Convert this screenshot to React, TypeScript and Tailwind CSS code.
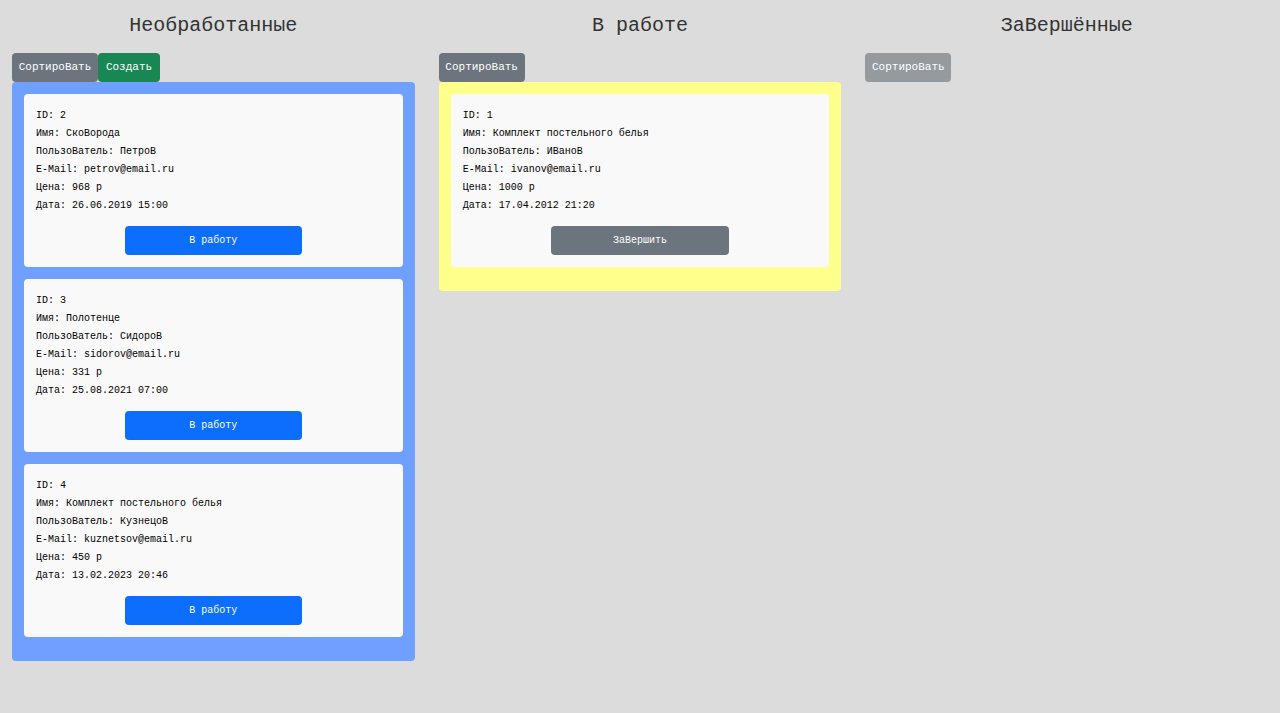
import React from 'react';

type Order = {
  id: number;
  name: string;
  user: string;
  email: string;
  price: number;
  date: string;
};

const fresh: Order[] = [
  { id: 2, name: 'СкоВорода', user: 'ПетроВ', email: 'petrov@email.ru', price: 968, date: '26.06.2019 15:00' },
  { id: 3, name: 'Полотенце', user: 'СидороВ', email: 'sidorov@email.ru', price: 331, date: '25.08.2021 07:00' },
  { id: 4, name: 'Комплект постельного белья', user: 'КузнецоВ', email: 'kuznetsov@email.ru', price: 450, date: '13.02.2023 20:46' },
];

const working: Order[] = [
  { id: 1, name: 'Комплект постельного белья', user: 'ИВаноВ', email: 'ivanov@email.ru', price: 1000, date: '17.04.2012 21:20' },
];

const OrderCard = ({ order, action, actionClass }: { order: Order; action: string; actionClass: string }) => (
  <div className="bg-[#f9f9f9] rounded-[4px] px-3 pt-[13px] pb-3 text-[10px] leading-[18px] text-black">
    <div>ID: {order.id}</div>
    <div>Имя: {order.name}</div>
    <div>ПользоВатель: {order.user}</div>
    <div>E-Mail: {order.email}</div>
    <div>Цена: {order.price} р</div>
    <div>Дата: {order.date}</div>
    <button className={`block w-1/2 mx-auto mt-[11px] h-[29px] rounded-[4px] text-white text-[10px] ${actionClass}`}>
      {action}
    </button>
  </div>
);

export default function App() {
  return (
    <div
      className="min-h-[713px] bg-[#dcdcdc] px-3"
      style={{ fontFamily: '"Liberation Mono", "DejaVu Sans Mono", monospace' }}
    >
      <div className="grid grid-cols-3 gap-6 items-start">
        {/* Необработанные */}
        <div>
          <h2 className="pt-3 text-center text-[20px] leading-7 text-[#333] font-normal">Необработанные</h2>
          <div className="flex mt-[13px]">
            <button className="h-[29px] w-[86px] rounded-[4px] bg-[#6c757d] text-white text-[11px]">СортироВать</button>
            <button className="h-[29px] w-[62px] rounded-[4px] bg-[#198754] text-white text-[11px]">Создать</button>
          </div>
          <div className="bg-[#70a0ff] rounded-[4px] px-3 pt-3 pb-6 flex flex-col gap-3">
            {fresh.map((o) => (
              <OrderCard key={o.id} order={o} action="В работу" actionClass="bg-[#0d6efd]" />
            ))}
          </div>
        </div>

        {/* В работе */}
        <div>
          <h2 className="pt-3 text-center text-[20px] leading-7 text-[#333] font-normal">В работе</h2>
          <div className="flex mt-[13px]">
            <button className="h-[29px] w-[86px] rounded-[4px] bg-[#6c757d] text-white text-[11px]">СортироВать</button>
          </div>
          <div className="bg-[#ffff8c] rounded-[4px] px-3 pt-3 pb-6 flex flex-col gap-3">
            {working.map((o) => (
              <OrderCard key={o.id} order={o} action="ЗаВершить" actionClass="bg-[#6c757d]" />
            ))}
          </div>
        </div>

        {/* Завершённые */}
        <div>
          <h2 className="pt-3 text-center text-[20px] leading-7 text-[#333] font-normal">ЗаВершённые</h2>
          <div className="flex mt-[13px]">
            <button className="h-[29px] w-[86px] rounded-[4px] bg-[#959a9f] text-white text-[11px]">СортироВать</button>
          </div>
        </div>
      </div>
    </div>
  );
}
